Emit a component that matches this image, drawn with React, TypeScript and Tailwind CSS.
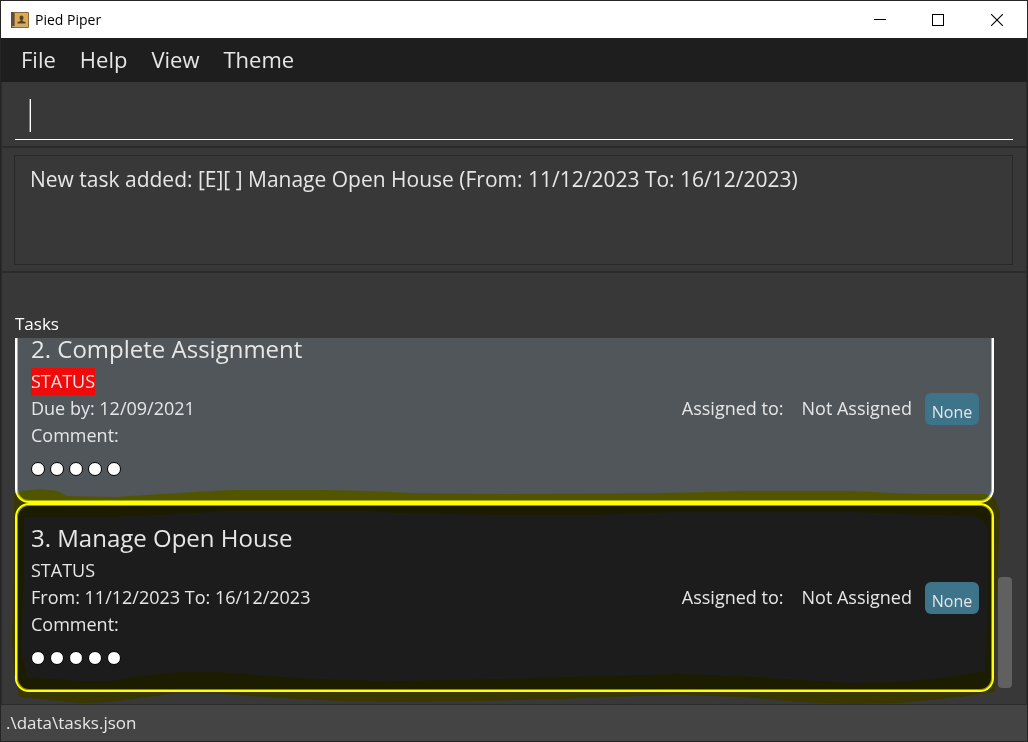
import React from "react";

type Task = {
  title: string;
  status: string;
  overdue: boolean;
  when: string;
  selected: boolean;
};

const tasks: Task[] = [
  { title: "2. Complete Assignment", status: "STATUS", overdue: true, when: "Due by: 12/09/2021", selected: false },
  { title: "3. Manage Open House", status: "STATUS", overdue: false, when: "From: 11/12/2023 To: 16/12/2023", selected: true },
];

const menus = ["File", "Help", "View", "Theme"];

function AppIcon() {
  return (
    <svg width="18" height="18" viewBox="0 0 18 18" aria-hidden="true">
      <rect x="0" y="1" width="18" height="16" rx="1" fill="#8a6a3a" />
      <rect x="0" y="1" width="3" height="16" fill="#5c4c44" />
      <rect x="4" y="2" width="13" height="13" fill="#dcaa57" />
      <rect x="1" y="15" width="16" height="1" fill="#c9a877" />
      <path d="M10.5 4.5c1.3 0 2 1 2 2.200c0 1-.4 1.800-1 2.200v1.200l3 1v1.400h-8v-1.400l3-1v-1.200c-.6-.4-1-1.200-1-2.200c0-1.200.7-2.200 2-2.200z" fill="#54432b" />
    </svg>
  );
}

function TitleBar() {
  return (
    <header className="flex h-[37px] shrink-0 items-center bg-white pl-[10px] text-black">
      <AppIcon />
      <h1 className="ml-[6px] flex-1 text-[14px]">Pied Piper</h1>
      <button aria-label="Minimize" className="flex h-full w-[58px] items-center justify-center">
        <svg width="12" height="12" viewBox="0 0 12 12" shapeRendering="crispEdges"><rect y="5" width="12" height="1" /></svg>
      </button>
      <button aria-label="Maximize" className="flex h-full w-[58px] items-center justify-center">
        <svg width="12" height="12" viewBox="0 0 12 12"><rect x="0.5" y="0.5" width="11" height="11" fill="none" stroke="black" /></svg>
      </button>
      <button aria-label="Close" className="flex h-full w-[60px] items-center justify-center">
        <svg width="12" height="12" viewBox="0 0 12 12"><path d="M0 0L12 12M12 0L0 12" stroke="black" strokeWidth="1.1" /></svg>
      </button>
    </header>
  );
}

function Highlighter() {
  return (
    <svg
      className="pointer-events-none absolute -top-[17px] -left-[6px] h-[217px] w-[calc(100%+16px)] mix-blend-multiply"
      viewBox="11 488 991 217"
      preserveAspectRatio="none"
      aria-hidden="true"
    >
      <path
        fillRule="evenodd"
        fill="#ffff00"
        d="M14 494L22 491L40 489L58 491L67 496L115 497L160 494L230 490L326 490L370 491L413 493L500 494L655 493L712 492L738 491L854 491L893 493L925 494L985 494L995 499L1000 512L999 540L998 570L995 620L995 692L960 697L900 703L850 704L800 702L740 697L680 695L640 696L560 699L480 701L400 702L340 701L280 698L220 694L180 693L140 698L110 702L80 703L19 697L14 670L12 640L14 570Z
        M24 517L115 517L160 515L230 511L360 511L400 513L500 515L590 515L680 512L850 512L900 514L975 516L983 520L988 530L988 600L985 671L950 677L900 682L850 683L800 680L740 676L680 674L600 676L500 679L400 681L340 680L280 677L220 672L180 672L140 676L110 681L80 681L27 677L21 650L24 570Z"
      />
    </svg>
  );
}

function TaskCard({ task }: { task: Task }) {
  return (
    <li
      className={
        "relative flex h-[189px] shrink-0 items-center justify-between rounded-[14px] border-2 border-white pr-[13px] pl-[14px] shadow-[inset_0_0_0_1px_#ffffff80] " +
        (task.selected ? "bg-[#1c1c1c]" : "bg-[#505659]")
      }
    >
      <div className="pb-2 text-[18px] leading-[27px]">
        <h2 className="mb-[3px] text-[24px] leading-8">{task.title}</h2>
        <p>
          <span className={task.overdue ? "inline-block bg-[#f00a0a]" : "inline-block"}>{task.status}</span>
        </p>
        <p>{task.when}</p>
        <p>Comment:</p>
        <div className="mt-[13px] flex gap-[5px]">
          {[0, 1, 2, 3, 4].map((n) => (
            <span key={n} className="size-[14px] rounded-full border border-black bg-white" />
          ))}
        </div>
      </div>
      <div className="flex items-center text-[18px]">
        <span>Assigned to:</span>
        <span className="ml-[18px]">Not Assigned</span>
        <span className="ml-[13px] flex h-8 w-[54px] items-end justify-center rounded-md bg-[#3e7489] pb-[1px] text-[16px]">None</span>
      </div>
      {task.selected && <Highlighter />}
    </li>
  );
}

export default function App() {
  return (
    <div className="flex h-screen flex-col overflow-hidden border border-[#252525] bg-[#383838] font-['Open_Sans','Noto_Sans',sans-serif] text-[#e6e6e6]">
      <TitleBar />
      <nav className="flex h-11 shrink-0 items-center gap-6 bg-[#1e1e1e] px-5 pb-px text-[22px]">
        {menus.map((m) => (
          <button key={m}>{m}</button>
        ))}
      </nav>
      <main className="flex min-h-0 flex-1 flex-col border-x border-[#2b2b2b]">
        <section className="border-b-2 border-[#2b2b2b] px-[13px] pt-3 pb-[6px]">
          <div className="relative">
            <input
              aria-label="Command"
              className="block h-[46px] w-full border-b border-white bg-transparent px-[15px] text-[24px] caret-transparent outline-none"
            />
            <span className="pointer-events-none absolute top-[5px] left-[14px] h-[33px] w-[2px] border-l border-[#808080] bg-white" />
          </div>
        </section>
        <section className="border-b-2 border-[#2b2b2b] pt-[7px] pr-[13px] pb-[6px] pl-3">
          <output className="block h-[110px] border border-[#282828] px-[15px] pt-[7px] text-[21px] leading-8">
            New task added: [E][ ] Manage Open House (From: 11/12/2023 To: 16/12/2023)
          </output>
        </section>
        <section className="flex min-h-0 flex-1 flex-col pt-10">
          <h2 className="mb-[3px] px-[13px] text-[17px] leading-[22px] text-white">Tasks</h2>
          <div className="flex min-h-0 flex-1 justify-between overflow-hidden pr-[14px] pl-[13px]">
            <ul className="flex min-h-0 flex-1 flex-col justify-end pb-3">
              {tasks.map((t) => (
                <TaskCard key={t.title} task={t} />
              ))}
            </ul>
            <div className="flex w-[18px] flex-col items-end justify-end pb-4">
              <div className="h-[111px] w-[14px] rounded bg-[#606060]" />
            </div>
          </div>
        </section>
      </main>
      <footer className="flex h-[37px] shrink-0 items-center border-t border-[#2b2b2b] bg-[#444444] px-[5px] text-[17px]">
        .\data\tasks.json
      </footer>
    </div>
  );
}
